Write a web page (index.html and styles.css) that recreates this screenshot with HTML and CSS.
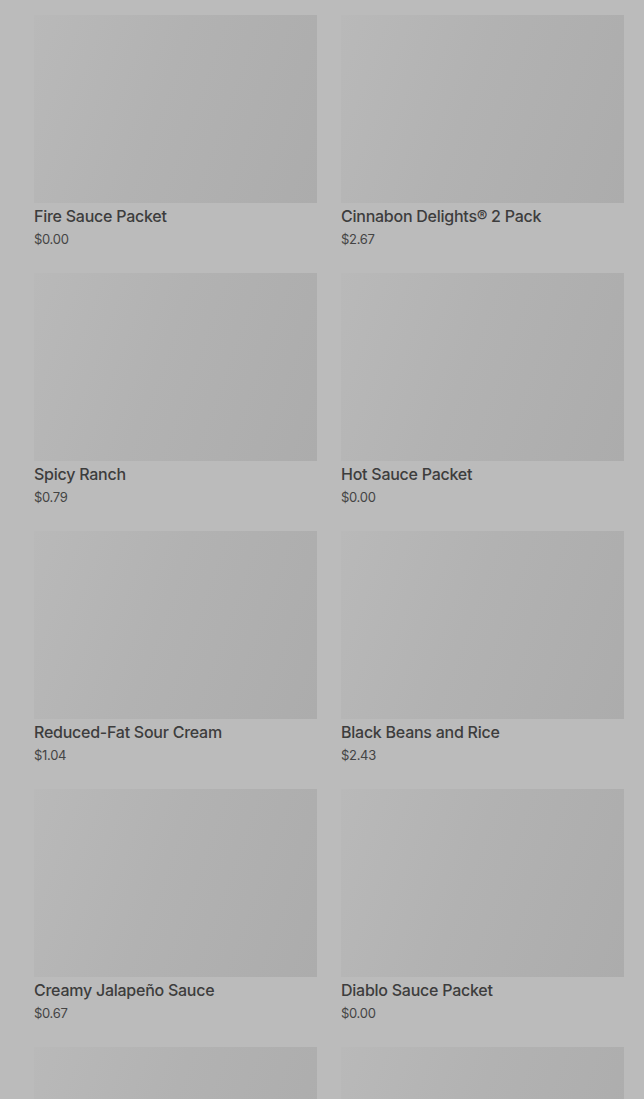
FILE: index.html
```html
<!DOCTYPE html>
<html lang="en">
<head>
  <meta charset="UTF-8" />
  <meta name="viewport" content="width=device-width, initial-scale=1.0" />
  <title>Sauces &amp; Sides</title>
  <link rel="stylesheet" href="styles.css">
</head>
<body>
  <main class="grid" id="items">
    <!-- product cards get rendered here -->
  </main>

  <script>
    const items = [
      { name: "Fire Sauce Packet", price: 0 },
      { name: "Cinnabon Delights® 2 Pack", price: 2.67 },
      { name: "Spicy Ranch", price: 0.79 },
      { name: "Hot Sauce Packet", price: 0 },
      { name: "Reduced-Fat Sour Cream", price: 1.04 },
      { name: "Black Beans and Rice", price: 2.43 },
      { name: "Creamy Jalapeño Sauce", price: 0.67 },
      { name: "Diablo Sauce Packet", price: 0 },
      { name: "", price: null },
      { name: "", price: null }
    ];

    function renderItems() {
      const grid = document.getElementById("items");
      grid.innerHTML = "";
      items.forEach(item => {
        const card = document.createElement("div");
        card.className = "item-card";
        card.innerHTML = `
          <div class="item-thumb"></div>
          <div class="item-name">${item.name}</div>
          <div class="item-price">${item.price === null ? "" : "$" + item.price.toFixed(2)}</div>
        `;
        grid.appendChild(card);
      });
    }

    renderItems();
  </script>
</body>
</html>
```

FILE: styles.css
```css
:root {
  --bg: #bbbbbb;
  --text: #3d3d3d;
  --thumb-light: #b9b9b9;
  --thumb-dark: #acacac;
}

body {
  margin: 0;
  background: var(--bg);
  color: var(--text);
  font-family: 'Inter', 'Liberation Sans', sans-serif;
  overflow: hidden;
}

.grid {
  display: grid;
  grid-template-columns: 1fr 1fr;
  column-gap: 24px;
  row-gap: 25px;
  padding: 15px 20px 0 34px;
}

.item-card {
  display: flex;
  flex-direction: column;
}

.item-thumb {
  height: 188px;
  background: linear-gradient(110deg, var(--thumb-light) 0%, #b2b2b2 45%, var(--thumb-dark) 100%);
}

.item-name {
  margin-top: 3px;
  font-size: 16px;
  line-height: 20px;
  font-weight: 500;
  letter-spacing: -0.25px;
}

.item-price {
  margin-top: 4px;
  font-size: 13px;
  line-height: 18px;
  letter-spacing: -0.3px;
  color: #444;
}
```
